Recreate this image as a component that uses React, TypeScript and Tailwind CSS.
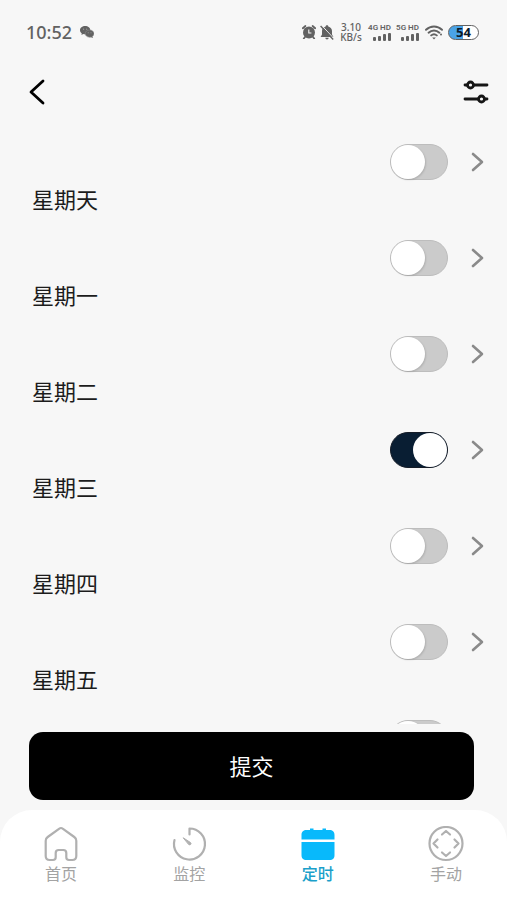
import type { ReactNode } from "react";
import { useState } from "react";

const initialDays = [
  { name: "星期天", on: false },
  { name: "星期一", on: false },
  { name: "星期二", on: false },
  { name: "星期三", on: true },
  { name: "星期四", on: false },
  { name: "星期五", on: false },
  { name: "星期六", on: false },
];

function Signal({ label }: { label: string }) {
  return (
    <div className="flex w-[23px] flex-col items-end">
      <span className="font-['Roboto',sans-serif] text-[8px] leading-[10px] font-semibold whitespace-nowrap">{label}</span>
      <svg width="18" height="8" viewBox="0 0 18 8" fill="currentColor" aria-hidden="true">
        <rect x="0" y="4" width="3" height="4" rx="1" />
        <rect x="5" y="3" width="3" height="5" rx="1" />
        <rect x="10" y="1" width="3" height="7" rx="1" />
        <rect x="15" y="0" width="3" height="8" rx="1" />
      </svg>
    </div>
  );
}

function StatusBar() {
  return (
    <div className="flex h-16 shrink-0 items-center justify-between pr-7 pl-[26px] text-[#626262]">
      <div className="flex items-center gap-2">
        <span className="text-lg leading-6 font-medium">10:52</span>
        <svg width="14" height="12" viewBox="0 0 14 12" aria-hidden="true">
          <path
            d="M5.2 0C2.3 0 0 1.9 0 4.2c0 1.3.7 2.4 1.8 3.2L1.4 9l1.9-1c.6.2 1.2.3 1.9.3C8 8.3 10.3 6.5 10.3 4.2S8 0 5.2 0z"
            fill="currentColor"
          />
          <path
            d="M9.600 4C7.100 4 5.200 5.600 5.200 7.600s1.900 3.600 4.400 3.600c.5 0 1-.1 1.500-.2l1.500.9-.3-1.400c1-.7 1.700-1.700 1.700-2.900C14 5.600 12 4 9.600 4z"
            fill="currentColor"
            stroke="#8a8a8a"
            strokeWidth=".6"
          />
          <g fill="#a4a4a4">
            <circle cx="3.600" cy="3.200" r=".6" />
            <circle cx="6.700" cy="3.200" r=".6" />
            <circle cx="8.200" cy="6.700" r=".5" />
            <circle cx="11" cy="6.700" r=".5" />
          </g>
        </svg>
      </div>
      <div className="flex items-center">
        <svg width="14" height="14" viewBox="0 0 14 14" aria-hidden="true">
          <circle cx="7" cy="7.500" r="6" fill="currentColor" />
          <path d="M.8 3.200 3.400 1M13.200 3.200 10.600 1M3 12l-1.200 1.500M11 12l1.200 1.500" stroke="currentColor" strokeWidth="1.800" strokeLinecap="round" />
          <path d="M6.800 4.500v3.500h2.600" fill="none" stroke="#f7f7f7" strokeWidth="1.100" />
        </svg>
        <svg className="ml-1" width="14" height="15" viewBox="0 0 14 15" aria-hidden="true">
          <path d="M7 .3c-.8 0-1.300.5-1.300 1.200C3.400 2.100 2 3.900 2 6v3.500L.6 12h12.800L12 9.500V6c0-2.100-1.400-3.900-3.700-4.500C8.300.8 7.800.3 7 .3zM5.300 12.800a1.700 1.700 0 0 0 3.400 0z" fill="currentColor" />
          <path d="m1.800.5 12 13" stroke="#f7f7f7" strokeWidth="1" />
          <path d="m.6 1 12.600 13.500" stroke="currentColor" strokeWidth="1.400" />
        </svg>
        <div className="ml-[6px] w-[22px] text-center text-[10px] leading-[10px] font-medium">
          <div>3.10</div>
          <div>KB/s</div>
        </div>
        <div className="ml-[6px] flex gap-[5px]">
          <Signal label="4G HD" />
          <Signal label="5G HD" />
        </div>
        <svg className="ml-[6px]" width="18" height="15" viewBox="0 0 18 15" fill="none" stroke="currentColor" strokeWidth="1.900" strokeLinecap="round" aria-hidden="true">
          <path d="M1 4.800c4.600-4.400 11.400-4.400 16 0M3.600 7.700c3.100-3 7.700-3 10.800 0M6.200 10.400c1.700-1.500 3.900-1.500 5.600 0" />
          <path d="m9 14.500-1.800-2h3.600z" fill="currentColor" stroke="none" />
          <circle cx="16" cy="9.500" r="1" fill="currentColor" stroke="none" />
        </svg>
        <div className="ml-[5px] h-[15px] w-[31px] rounded-full border border-[#626262] bg-linear-to-r from-[#4aa3e6] from-50% to-white to-50% text-center text-[13px] leading-[13px] font-bold text-[#0b1a2a]">
          54
        </div>
      </div>
    </div>
  );
}

type DayRowProps = { name: string; on: boolean; onToggle: () => void };

function DayRow({ name, on, onToggle }: DayRowProps) {
  return (
    <li className="flex h-24 shrink-0 flex-col pt-6">
      <div className="flex items-center justify-end gap-[22px] pr-[22px]">
        <label className="relative block h-9 w-[58px] cursor-pointer">
          <input type="checkbox" className="peer sr-only" checked={on} onChange={onToggle} aria-label={name} />
          <span className="block h-full rounded-full border border-[#bdbdbd] bg-[#cbcbcb] peer-checked:border-[#151c27] peer-checked:bg-[#091e33]" />
          <span className="absolute top-px left-px size-[34px] rounded-full bg-white shadow-[1px_1px_2px_#0002] peer-checked:left-[23px] peer-checked:shadow-none" />
        </label>
        <button type="button" aria-label={`${name}详情`} className="text-[#8a8a8a]">
          <svg width="15" height="22" viewBox="0 0 15 22" fill="none" stroke="currentColor" strokeWidth="2.600" strokeLinecap="round" strokeLinejoin="round">
            <path d="m3 3 9 8-9 8" />
          </svg>
        </button>
      </div>
      <span className="mt-[6px] pl-8 text-[22px] leading-[26px] text-[#1c1c1c]">{name}</span>
    </li>
  );
}

function NavItem({ label, active = false, children }: { label: string; active?: boolean; children: ReactNode }) {
  return (
    <a
      href="#"
      aria-current={active ? "page" : undefined}
      className={`flex w-[34px] flex-col items-center ${active ? "font-medium text-[#1b9fca]" : "text-[#a3a3a3]"}`}
    >
      <svg className="size-9 shrink-0" viewBox="0 0 36 36" fill="none" stroke="#b0b0b0" strokeWidth="2.200" strokeLinecap="round" strokeLinejoin="round" aria-hidden="true">
        {children}
      </svg>
      <span className="text-base leading-6 whitespace-nowrap">{label}</span>
    </a>
  );
}

export default function App() {
  const [days, setDays] = useState(initialDays);

  const toggle = (name: string) =>
    setDays(days.map((d) => (d.name === name ? { ...d, on: !d.on } : d)));

  return (
    <div className="flex h-screen flex-col bg-[#f7f7f7] font-['Noto_Sans','Noto_Sans_CJK_SC',sans-serif]">
      <StatusBar />
      <header className="flex h-14 shrink-0 items-center justify-between pr-[18px] pl-7">
        <button type="button" aria-label="返回">
          <svg width="18" height="28" viewBox="0 0 18 28" fill="none" stroke="#000" strokeWidth="2.800" strokeLinecap="round" strokeLinejoin="round">
            <path d="M15 3 3 14l12 11" />
          </svg>
        </button>
        <button type="button" aria-label="设置">
          <svg width="26" height="24" viewBox="0 0 26 24" fill="none" stroke="#161616" strokeWidth="2.800" strokeLinecap="round">
            <path d="M2 5h2M11 5h13M2 19h13M22 19h2" />
            <circle cx="7.500" cy="5" r="3" />
            <circle cx="18.500" cy="19" r="3" />
          </svg>
        </button>
      </header>

      <ul className="flex min-h-0 flex-1 flex-col overflow-y-auto [scrollbar-width:none]">
        {days.map((d) => (
          <DayRow key={d.name} name={d.name} on={d.on} onToggle={() => toggle(d.name)} />
        ))}
      </ul>

      <div className="shrink-0 pt-2 pr-[33px] pb-[10px] pl-[29px]">
        <button type="button" className="h-[68px] w-full rounded-[14px] bg-black text-[22px] text-white">
          提交
        </button>
      </div>

      <nav className="flex h-[90px] shrink-0 justify-between rounded-t-[32px] bg-white px-11 pt-4">
        <NavItem label="首页">
          <path d="M18 2c.8 0 1.300.3 2 .8l11.300 8.200c1.500 1.100 2 2 2 3.700v15.300c0 2.500-1.500 4-4 4h-3.300c-1.700 0-2.700-1-2.700-2.700V27c0-2-1-3-3-3h-4.600c-2 0-3 1-3 3v4.300c0 1.700-1 2.700-2.700 2.700H6.700c-2.500 0-4-1.500-4-4V14.700c0-1.700.5-2.600 2-3.700L16 2.800c.7-.5 1.200-.8 2-.8z" />
        </NavItem>
        <NavItem label="监控">
          <path d="M18.500 8.500v-6A15.500 15.500 0 1 1 3.500 14" />
          <path d="m12.500 12 7 4.500c1.300 1 .2 3-1.500 2.200z" fill="#b0b0b0" strokeWidth="1" />
        </NavItem>
        <NavItem label="定时" active>
          <path d="M1.500 13.500V9c0-3.500 2-5 5-5H10V2.500h3.500V4h9V2.500H26V4h3.500c3 0 5 1.500 5 5v4.500z" fill="#08b9fb" stroke="none" />
          <path d="M1.500 16h33v13c0 3.500-1.500 5-5 5h-23c-3.500 0-5-1.500-5-5z" fill="#08b9fb" stroke="none" />
        </NavItem>
        <NavItem label="手动">
          <circle cx="18" cy="17.500" r="16.500" />
          <path d="m14 8.500 4-3.500 4 3.500M14 26.500l4 3.500 4-3.500M9.500 13.500l-4 4 4 4M26.500 13.500l4 4-4 4" />
        </NavItem>
      </nav>
    </div>
  );
}
